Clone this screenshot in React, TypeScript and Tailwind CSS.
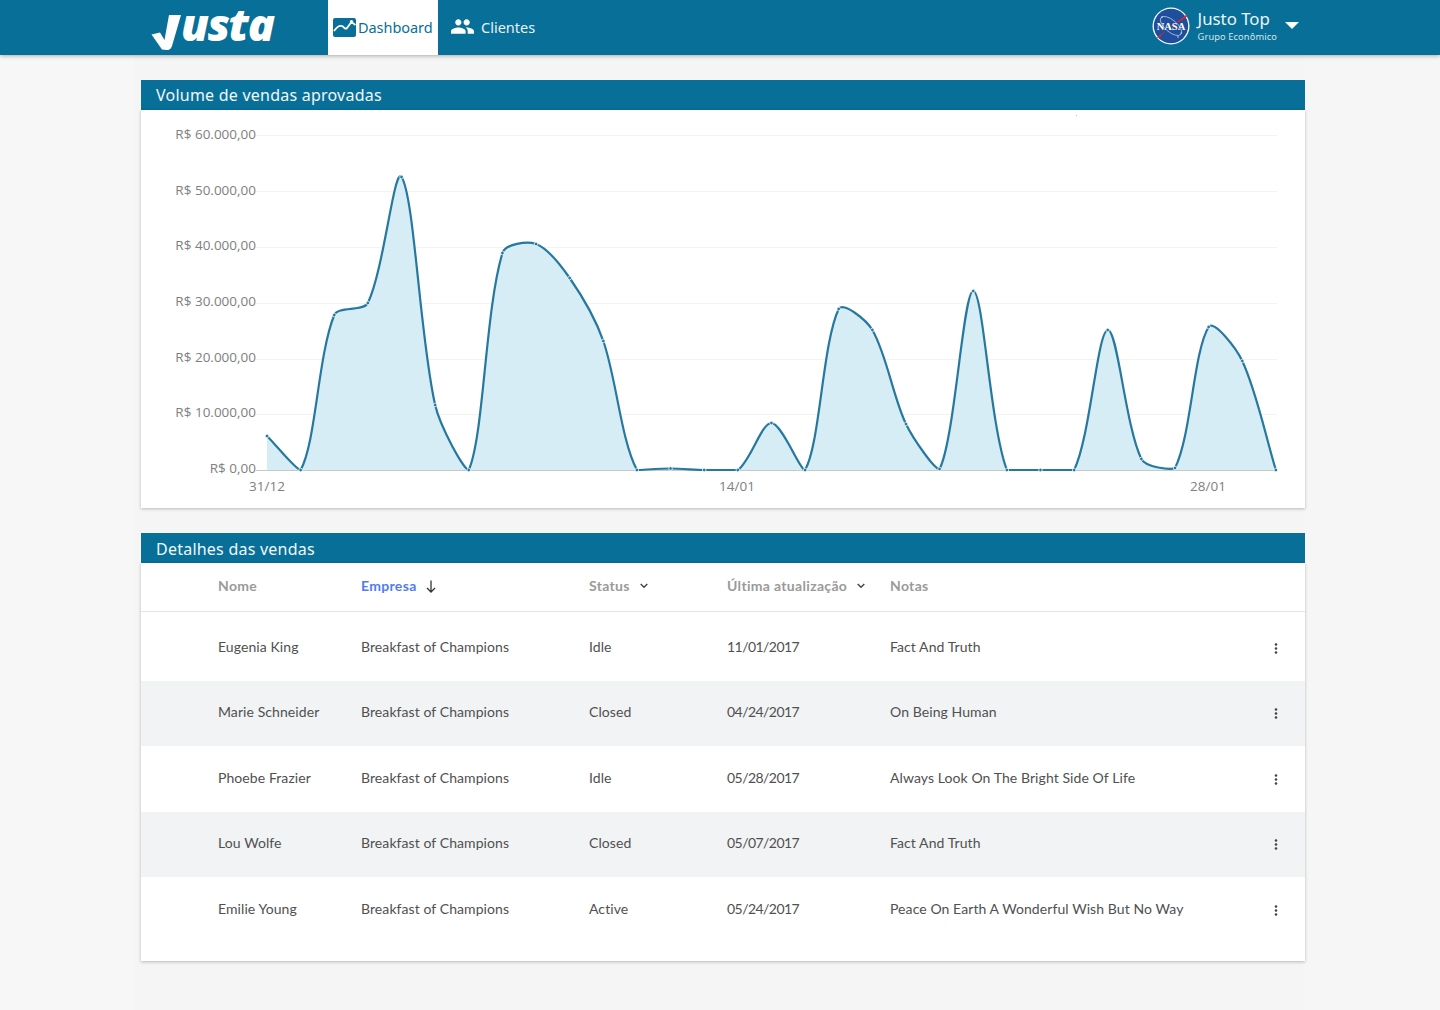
import React from "react";

type P = [number, number];
const xs = (i: number) => 267 - 141 + i * 33.63;
const ysRaw = [436, 470, 315, 303, 177, 405, 470, 253, 244, 278, 341, 470, 468.5, 470, 470, 423, 470, 309, 330, 424, 469, 291, 470, 470, 470, 330, 459, 468, 327, 361, 470];
const pts: P[] = ysRaw.map((y, i) => [xs(i), y - 110]);

function linePath(points: P[], t = 0.3) {
  const ctrl = points.map((p, i) => {
    const a = points[Math.max(i - 1, 0)];
    const b = points[Math.min(i + 1, points.length - 1)];
    const d01 = Math.hypot(p[0] - a[0], p[1] - a[1]);
    const d12 = Math.hypot(b[0] - p[0], b[1] - p[1]);
    const sum = d01 + d12 || 1;
    const fa = (t * d01) / sum;
    const fb = (t * d12) / sum;
    const cl = (v: number) => Math.min(v, 360);
    return {
      prev: [p[0] - fa * (b[0] - a[0]), cl(p[1] - fa * (b[1] - a[1]))] as P,
      next: [p[0] + fb * (b[0] - a[0]), cl(p[1] + fb * (b[1] - a[1]))] as P,
    };
  });
  let d = `M${points[0][0]} ${points[0][1]}`;
  for (let i = 1; i < points.length; i++) {
    const c1 = ctrl[i - 1].next;
    const c2 = ctrl[i].prev;
    d += ` C${c1[0].toFixed(2)} ${c1[1].toFixed(2)} ${c2[0].toFixed(2)} ${c2[1].toFixed(2)} ${points[i][0].toFixed(2)} ${points[i][1].toFixed(2)}`;
  }
  return d;
}
const line = linePath(pts);
const area = `${line} L${pts[pts.length - 1][0]} 360 L${pts[0][0]} 360 Z`;

const yLabels = [
  ["R$ 60.000,00", 25, 29],
  ["R$ 50.000,00", 81, 85],
  ["R$ 40.000,00", 137, 140],
  ["R$ 30.000,00", 193, 196],
  ["R$ 20.000,00", 249, 252],
  ["R$ 10.000,00", 304, 307],
] as const;

function Logo() {
  return (
    <div className="flex h-[55px] w-[187px] shrink-0 items-start pl-[10px]">
      <svg className="mt-[14px] shrink-0" width="31" height="37" viewBox="0 0 31 37">
        <path d="M0.5 20.5 L9 18.5 L13.5 26 L18 1 L30 1 L21 32 Q19.5 36.5 15.5 36 L11 35.5 Z" fill="#ffffff" />
      </svg>
      <span className="ml-[-1px] text-[45px] font-extrabold italic leading-[47px] tracking-[-1.5px] text-white [font-family:'Open_Sans',sans-serif]">
        usta
      </span>
    </div>
  );
}

function Nasa() {
  return (
    <svg width="38" height="38" viewBox="0 0 38 38">
      <circle cx="19" cy="19" r="18.5" fill="#ffffff" />
      <circle cx="19" cy="19" r="17.2" fill="#1f4e9c" />
      <ellipse cx="19" cy="19" rx="13" ry="6" fill="none" stroke="#c9d8ee" strokeWidth="0.7" transform="rotate(40 19 19)" />
      <path d="M4 31 L34 8 L36 9 L14 23 L8 30 Z" fill="#e0262f" />
      <text x="19" y="22.5" textAnchor="middle" fontSize="10.5" fontWeight="700" fill="#ffffff" fontFamily="'Liberation Serif', serif">
        NASA
      </text>
      <circle cx="10" cy="10" r="0.7" fill="#fff" />
      <circle cx="26" cy="30" r="0.7" fill="#fff" />
      <circle cx="29" cy="26" r="0.6" fill="#fff" />
    </svg>
  );
}

function Header() {
  return (
    <header className="relative z-10 flex h-[55px] items-stretch bg-[#086f98] pl-[141px] pr-[141px] shadow-[0_1px_4px_rgba(0,0,0,0.3)]">
      <Logo />
      <div className="flex w-[110px] items-center bg-white pl-[5px] text-[#086f98]">
        <svg width="23" height="19" viewBox="0 0 23 19" className="mr-[2px] shrink-0">
          <rect width="23" height="19" rx="2" fill="#086f98" />
          <path d="M1 13 C3 10 6 7 9 8 C11 9 12 12 14 10 L18.5 4 L22.5 7" fill="none" stroke="#ffffff" strokeWidth="1.8" />
          <circle cx="18.5" cy="3.8" r="1.7" fill="#fff" />
        </svg>
        <span className="text-[14.5px] tracking-[-0.05px] [font-family:'Noto_Sans',sans-serif]">Dashboard</span>
      </div>
      <div className="flex items-center pl-[12px] text-white">
        <svg width="25" height="25" viewBox="0 0 24 24" fill="#ffffff" className="mb-[3px]">
          <path d="M16 11c1.66 0 2.99-1.34 2.99-3S17.66 5 16 5c-1.66 0-3 1.34-3 3s1.34 3 3 3zm-8 0c1.66 0 2.99-1.34 2.99-3S9.66 5 8 5C6.34 5 5 6.34 5 8s1.34 3 3 3zm0 2c-2.33 0-7 1.17-7 3.5V19h14v-2.5c0-2.33-4.67-3.5-7-3.5zm8 0c-.29 0-.62.02-.97.05 1.16.84 1.97 1.97 1.97 3.45V19h6v-2.5c0-2.33-4.67-3.5-7-3.5z" />
        </svg>
        <span className="ml-[6px] text-[14.5px] text-[#e8f2f6] [font-family:'Noto_Sans',sans-serif]">Clientes</span>
      </div>
      <div className="ml-auto flex items-center">
        <div className="mb-[4px]"><Nasa /></div>
        <div className="mb-[3px] ml-[8px] flex flex-col text-white [font-family:'Noto_Sans',sans-serif]">
          <span className="text-[16.8px] leading-[20px] text-[#eef6f9]">Justo Top</span>
          <span className="mt-[2px] text-[9.3px] leading-[12px] tracking-[0.1px] text-[#d5e6ee]">Grupo Econômico</span>
        </div>
        <div className="mb-[4px] ml-[8px] h-0 w-0 border-x-[7.5px] border-t-[7.5px] border-x-transparent border-t-white" />
      </div>
    </header>
  );
}

function TitleBar({ children, extra }: { children: React.ReactNode; extra?: string }) {
  return (
    <div className={`flex h-[30px] items-center bg-[#086f98] pl-[15px] text-[16px] tracking-[0.23px] text-[#f2f8fa] [font-family:'Noto_Sans',sans-serif] ${extra ?? ""}`}>
      {children}
    </div>
  );
}

function Chart() {
  return (
    <div className="h-[398px] bg-white shadow-[0_1px_3px_rgba(0,0,0,0.25)]">
      <svg width="1164" height="398" viewBox="0 0 1164 398">
        <rect x="935" y="5" width="1" height="1" fill="#bbbbbb" />
        {yLabels.map(([label, y, ty]) => (
          <g key={label}>
            <line x1="115" x2="1136" y1={y + 0.5} y2={y + 0.5} stroke="#f3f3f3" strokeWidth="1" />
            <text x="115" y={ty} textAnchor="end" fontSize="13.5" fill="#808080" fontFamily="'Open Sans', sans-serif">
              {label}
            </text>
          </g>
        ))}
        <path d={area} fill="#d7edf6" />
        <line x1="115" x2="1136" y1="360.5" y2="360.5" stroke="#c8c8c8" strokeWidth="1" />
        <text x="115" y="363" textAnchor="end" fontSize="13.5" fill="#808080" fontFamily="'Open Sans', sans-serif">
          R$ 0,00
        </text>
        <path d={line} fill="none" stroke="#27789f" strokeWidth="2.2" />
        {pts.map((p, i) => (
          <circle key={i} cx={p[0]} cy={p[1]} r="1.8" fill="#27789f" stroke="#ffffff" strokeWidth="0.7" />
        ))}
        {[["31/12", 126], ["14/01", 596], ["28/01", 1067]].map(([t, x]) => (
          <text key={t} x={x} y="381" textAnchor="middle" fontSize="13.5" fill="#808080" fontFamily="'Open Sans', sans-serif">
            {t}
          </text>
        ))}
      </svg>
    </div>
  );
}

function Chevron() {
  return (
    <svg width="8" height="6" viewBox="0 0 8 6" className="ml-[10px] mt-[2px]">
      <path d="M0.7 1 L4 4.3 L7.3 1" fill="none" stroke="#444" strokeWidth="1.4" />
    </svg>
  );
}

const gridCols = "grid grid-cols-[143px_228px_138px_163px_1fr_14px] pl-[77px] pr-[22px]";

const rows = [
  ["Eugenia King", "Idle", "11/01/2017", "Fact And Truth", "h-[66px] bg-white pb-[3px]"],
  ["Marie Schneider", "Closed", "04/24/2017", "On Being Human", "h-[65px] bg-[#f1f3f5] pb-[4px]"],
  ["Phoebe Frazier", "Idle", "05/28/2017", "Always Look On The Bright Side Of Life", "h-[66px] bg-white pb-[3px]"],
  ["Lou Wolfe", "Closed", "05/07/2017", "Fact And Truth", "h-[65px] bg-[#f1f3f5] pb-[4px]"],
  ["Emilie Young", "Active", "05/24/2017", "Peace On Earth A Wonderful Wish But No Way", "h-[66px] bg-white pb-[3px]"],
];

function Kebab() {
  return (
    <svg width="4" height="11" viewBox="0 0 4 11" className="mx-auto mt-[3px]">
      <circle cx="2" cy="1.5" r="1.3" fill="#444" />
      <circle cx="2" cy="5.5" r="1.3" fill="#444" />
      <circle cx="2" cy="9.5" r="1.3" fill="#444" />
    </svg>
  );
}

function Table() {
  return (
    <div className="bg-white pb-[18px] pt-0 text-[14px] shadow-[0_1px_3px_rgba(0,0,0,0.25)] [font-family:Lato,sans-serif]">
      <div className={`${gridCols} h-[49px] items-center border-b border-[#e3e3e3] pb-[4px] font-bold tracking-[0.32px] text-[#9a9a9a]`}>
        <span>Nome</span>
        <span className="flex items-center text-[#4f7cf6]">
          Empresa
          <svg width="10" height="13" viewBox="0 0 10 13" className="ml-[9px] mt-[2px]">
            <path d="M5 0.5 V12 M1 8 L5 12 L9 8" fill="none" stroke="#333" strokeWidth="1.3" />
          </svg>
        </span>
        <span className="flex items-center">Status<Chevron /></span>
        <span className="flex items-center">Última atualização<Chevron /></span>
        <span>Notas</span>
        <span />
      </div>
      <div className="pt-[3px]">
        {rows.map((r) => (
          <div key={r[0]} className={`${gridCols} ${r[4]} items-center tracking-[0.08px] text-[#505050]`}>
            <span>{r[0]}</span>
            <span>Breakfast of Champions</span>
            <span>{r[1]}</span>
            <span className="tracking-[-0.55px]">{r[2]}</span>
            <span>{r[3]}</span>
            <Kebab />
          </div>
        ))}
      </div>
    </div>
  );
}

export default function App() {
  return (
    <div className="min-h-[1010px] overflow-hidden bg-[linear-gradient(90deg,#f7f7f7_135px,#f5f5f6_135px,#f5f5f6_1305px,#f6f6f7_1305px)]">
      <Header />
      <main className="ml-[141px] w-[1164px] pt-[25px]">
        <TitleBar>Volume de vendas aprovadas</TitleBar>
        <Chart />
        <div className="mt-[25px]">
          <TitleBar extra="pt-[2px]">Detalhes das vendas</TitleBar>
          <Table />
        </div>
      </main>
    </div>
  );
}
